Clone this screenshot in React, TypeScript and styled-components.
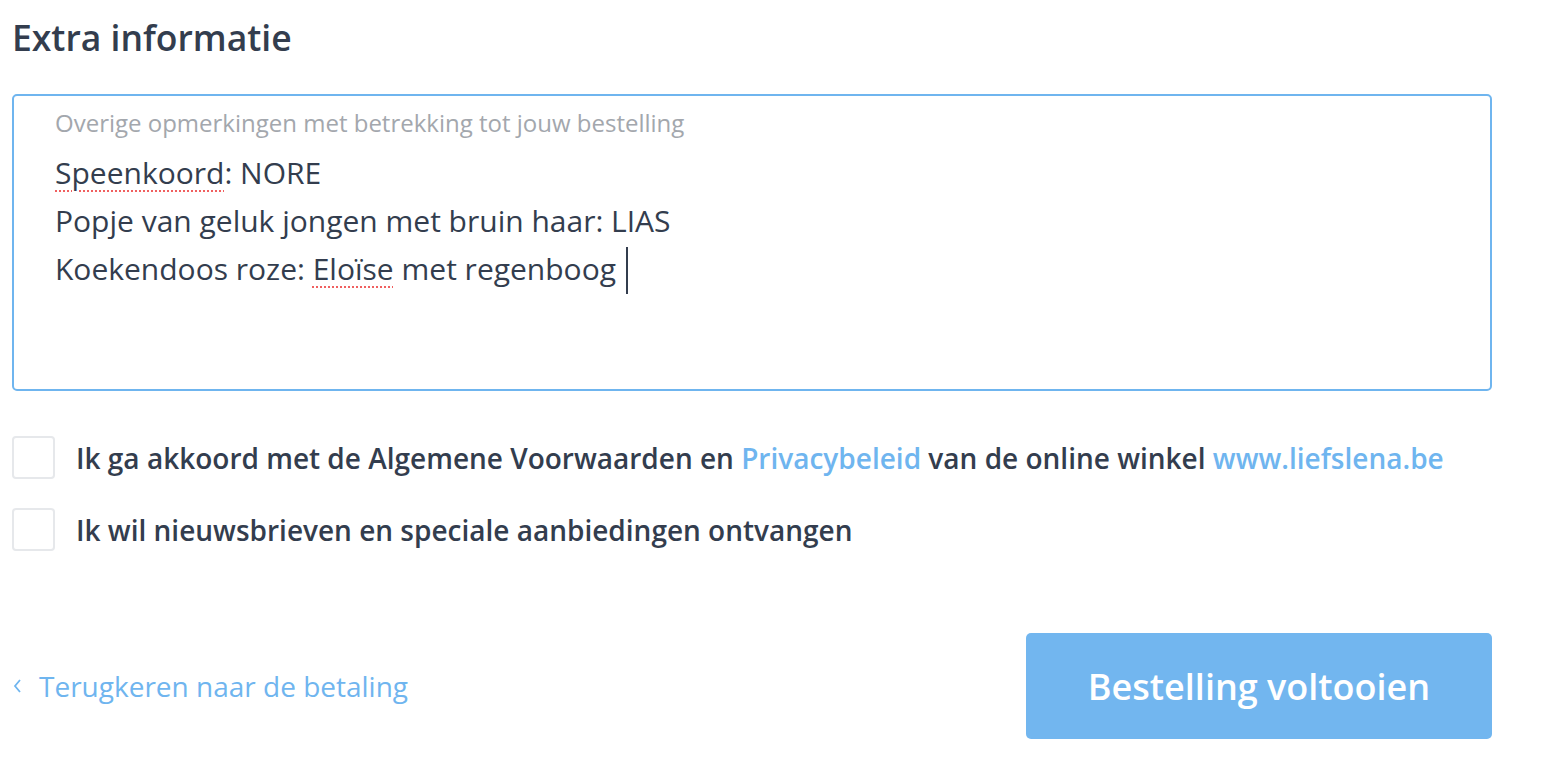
import styled, { createGlobalStyle } from "styled-components";

const GlobalStyle = createGlobalStyle`
  body {
    margin: 0;
    background: #ffffff;
    font-family: "Open Sans", "Noto Sans", sans-serif;
    color: #333d4e;
  }
`

const Page = styled.div`
  width: 1492px;
  padding: 0 0 0 12px;
  box-sizing: border-box;
`

const Heading = styled.h2`
  margin: 0;
  padding-top: 14px;
  font-size: 35.5px;
  font-weight: 600;
  line-height: 46px;
  color: #333d4e;
`

const Field = styled.div`
  margin-top: 34px;
  height: 297px;
  box-sizing: border-box;
  border: 2px solid #6fb5ef;
  border-radius: 5px;
  padding: 13px 41px;
`

const FieldLabel = styled.div`
  font-size: 24px;
  line-height: 28px;
  color: #a3a7ad;
`

const FieldText = styled.div`
  margin-top: 12px;
  font-size: 30px;
  line-height: 48px;
  color: #333d4e;
`

const Misspelled = styled.span`
  text-decoration: underline dotted #f06060;
  text-decoration-thickness: 2px;
  text-underline-offset: 6px;
`

const Caret = styled.span`
  display: inline-block;
  width: 2px;
  height: 47px;
  margin-left: 10px;
  vertical-align: -14px;
  background: #333d4e;
`

const Options = styled.div`
  margin-top: 45px;
  display: flex;
  flex-direction: column;
  gap: 29px;
`

const OptionRow = styled.label`
  display: flex;
  align-items: center;
  gap: 21px;
  font-size: 28px;
  font-weight: 600;
  color: #333d4e;
`

const Box = styled.span`
  width: 43px;
  height: 43px;
  box-sizing: border-box;
  border: 2px solid #e6e8eb;
  border-radius: 4px;
  flex-shrink: 0;
`

const Link = styled.a`
  color: #6fb5ef;
  text-decoration: none;
`

const Footer = styled.div`
  margin-top: 82px;
  display: flex;
  justify-content: space-between;
  align-items: center;
`

const BackLink = styled.a`
  display: flex;
  align-items: center;
  gap: 16px;
  font-size: 28px;
  color: #6fb5ef;
  text-decoration: none;
`

const SubmitButton = styled.button`
  width: 466px;
  height: 106px;
  border: none;
  border-radius: 5px;
  background: #72b6ef;
  color: #ffffff;
  font-family: "Open Sans", "Noto Sans", sans-serif;
  font-size: 36px;
  font-weight: 600;
`

export default function App() {
  return (
    <>
      <GlobalStyle />
      <Page>
        <Heading>Extra informatie</Heading>
        <Field>
          <FieldLabel>Overige opmerkingen met betrekking tot jouw bestelling</FieldLabel>
          <FieldText>
            <div><Misspelled>Speenkoord</Misspelled>: NORE</div>
            <div>Popje van geluk jongen met bruin haar: LIAS</div>
            <div>Koekendoos roze: <Misspelled>Eloïse</Misspelled> met regenboog<Caret /></div>
          </FieldText>
        </Field>
        <Options>
          <OptionRow>
            <Box />
            <span>
              Ik ga akkoord met de Algemene Voorwaarden en <Link href="#">Privacybeleid</Link> van de online winkel <Link href="#">www.liefslena.be</Link>
            </span>
          </OptionRow>
          <OptionRow>
            <Box />
            <span>Ik wil nieuwsbrieven en speciale aanbiedingen ontvangen</span>
          </OptionRow>
        </Options>
        <Footer>
          <BackLink href="#">
            <svg width="11" height="16" viewBox="0 0 11 16" fill="none">
              <path d="M8 2 L3 8 L8 14" stroke="#6fb5ef" strokeWidth="1.8" />
            </svg>
            Terugkeren naar de betaling
          </BackLink>
          <SubmitButton>Bestelling voltooien</SubmitButton>
        </Footer>
      </Page>
    </>
  )
}
